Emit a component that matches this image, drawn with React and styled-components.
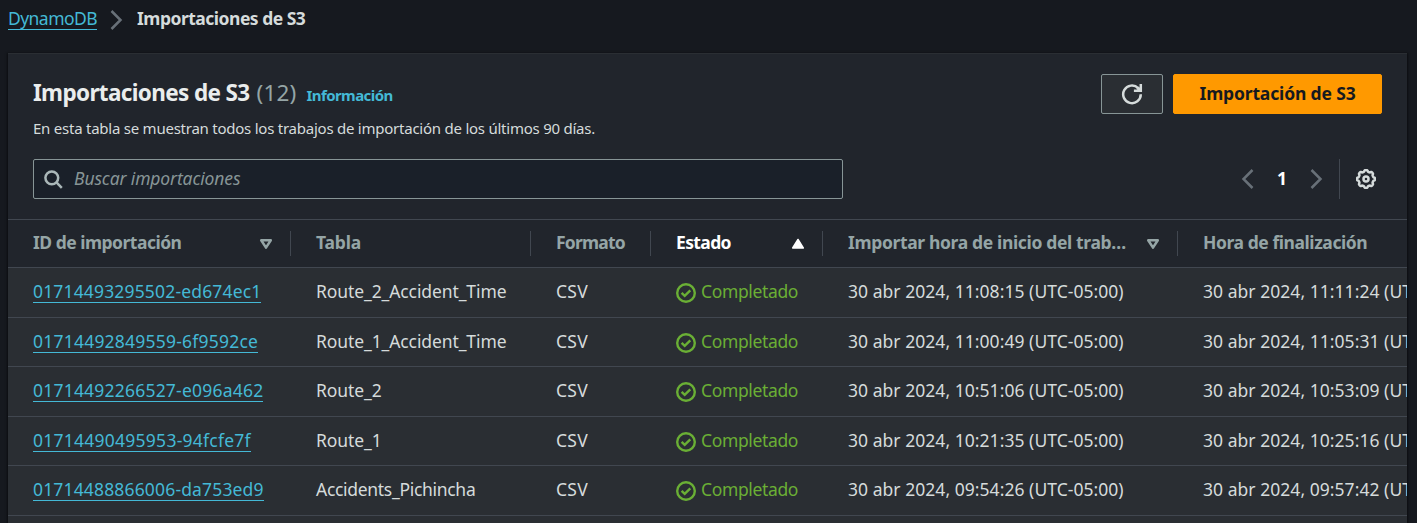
import React from "react";
import styled, { createGlobalStyle } from "styled-components";

const GlobalStyle = createGlobalStyle`
  * { box-sizing: border-box; }
  body {
    margin: 0;
    background: #16191f;
    color: #d5dbdb;
    font-family: "Noto Sans", "Open Sans", sans-serif;
    font-size: 17.5px;
    line-height: 25px;
    overflow: hidden;
  }
`;

const Page = styled.main`
  height: 523px;
  padding: 6px 10px 0 8px;
  overflow: hidden;
`;

const Breadcrumbs = styled.nav`
  display: flex;
  align-items: flex-start;
  height: 47px;
`;

const Link = styled.a`
  display: inline-block;
  height: ${(p) => p.$height || 24}px;
  color: #44b9d6;
  letter-spacing: ${(p) => p.$track || 0}px;
  white-space: nowrap;
  border-bottom: 1px solid #44b9d6;
`;

const CrumbIcon = styled.svg`
  display: block;
  margin: 4px 14px 0 13px;
`;

const Current = styled.span`
  font-weight: 700;
  letter-spacing: -0.5px;
`;

const Panel = styled.section`
  width: 1399px;
  height: 480px;
  background: #21252c;
  border-top: 1px solid #2a2e33;
  box-shadow: 0 1px 2px 1px rgba(0, 0, 0, 0.5);
  overflow: hidden;
`;

const PanelHeader = styled.header`
  display: flex;
  justify-content: space-between;
  height: 105px;
  padding: 20px 25px 0;
`;

const TitleRow = styled.div`
  display: flex;
  align-items: baseline;
  height: 36px;
`;

const Title = styled.h1`
  margin: 0;
  color: #eaeded;
  font-size: 22.5px;
  line-height: 37px;
  letter-spacing: -0.64px;
`;

const Counter = styled.span`
  margin-left: 7px;
  color: #95a5a6;
  font-size: 22.5px;
  letter-spacing: 0.2px;
`;

const InfoLink = styled.a`
  margin-left: 10px;
  color: #44b9d6;
  font-size: 15px;
  font-weight: 700;
  letter-spacing: -0.58px;
`;

const Description = styled.p`
  margin: 6px 0 0;
  font-size: 15px;
  line-height: 25px;
  letter-spacing: -0.24px;
`;

const Actions = styled.div`
  display: flex;
  gap: 10px;
`;

const Button = styled.button`
  display: flex;
  align-items: center;
  justify-content: center;
  width: ${(p) => p.$width}px;
  height: 40px;
  padding: 0 0 ${(p) => (p.$primary ? 3 : 0)}px;
  border: 1px solid ${(p) => (p.$primary ? "#ff9900" : "#879596")};
  border-radius: 2px;
  background: ${(p) => (p.$primary ? "#ff9900" : "#2a2e33")};
  color: ${(p) => (p.$primary ? "#16191f" : "#d5dbdb")};
  font: 700 17.5px "Noto Sans", sans-serif;
  letter-spacing: -0.15px;
`;

const Tools = styled.div`
  display: flex;
  justify-content: space-between;
  height: 60px;
  padding: 0 25px;
`;

const Search = styled.label`
  display: flex;
  align-items: center;
  gap: 11px;
  width: 810px;
  height: 40px;
  padding-left: 10px;
  border: 1px solid #879596;
  border-radius: 2px;
  background: #1a2029;
`;

const Placeholder = styled.span`
  padding-bottom: 2px;
  color: #879596;
  font-style: italic;
  letter-spacing: -0.12px;
`;

const Pager = styled.div`
  display: flex;
  align-items: center;
  height: 40px;
`;

const PageNumber = styled.span`
  width: 56px;
  padding-bottom: 2px;
  color: #fff;
  font-weight: 700;
  text-align: center;
`;

const Preferences = styled.div`
  display: flex;
  align-items: center;
  height: 40px;
  margin-left: 16px;
  padding: 0 6px 0 16px;
  border-left: 1px solid #414750;
`;

const Row = styled.div`
  display: grid;
  grid-template-columns: 283px 240px 120px 172px 355px 229px;
  align-items: center;
  height: ${(p) => p.$height}px;
  background: #2a2e33;
  border-bottom: 1px solid #414750;
`;

const HeaderRow = styled(Row)`
  background: #21252c;
  border-top: 1px solid #414750;
`;

const HeaderCell = styled.div`
  display: flex;
  align-items: center;
  justify-content: space-between;
  height: 25px;
  padding: 0 17px 0 25px;
  border-right: 1px solid #414750;
  color: ${(p) => (p.$active ? "#fff" : "#95a5a6")};
  font-weight: 700;
  letter-spacing: ${(p) => p.$track}px;
  white-space: nowrap;

  &:last-child {
    border-right: 0;
  }
`;

const HeaderLabel = styled.span`
  padding-bottom: 2px;
`;

const Cell = styled.div`
  height: 27px;
  padding-left: 25px;
  letter-spacing: ${(p) => p.$track || 0}px;
  white-space: nowrap;
  overflow: hidden;
`;

const Status = styled(Cell)`
  display: flex;
  align-items: flex-start;
  gap: 5px;
  color: #6aaf35;
  letter-spacing: -0.36px;
`;

const StatusIcon = styled.svg`
  flex: none;
  margin-top: 4px;
`;

const Chevron = ({ left, as: Svg = "svg" }) => (
  <Svg width="13" height="20" viewBox="0 0 13 20" fill="none" stroke="#687078" strokeWidth="2.5">
    <path d={left ? "M11.5 1 2.5 10l9 9" : "M1.5 1l9 9-9 9"} />
  </Svg>
);

const SortIcon = ({ active }) => (
  <svg width="14" height="12" viewBox="0 0 14 12" strokeLinejoin="round" strokeWidth="2.5">
    {active ? (
      <path d="M7 1.5 12.3 10H1.7z" fill="#fff" stroke="#fff" strokeWidth="1.5" />
    ) : (
      <path d="M2.2 2.2h9.6L7 9.6z" fill="none" stroke="#95a5a6" />
    )}
  </svg>
);

const SearchIcon = () => (
  <svg width="19" height="19" viewBox="0 0 19 19" fill="none" stroke="#aab7b8" strokeWidth="2.5">
    <circle cx="7.8" cy="7.8" r="6.4" />
    <path d="m12.2 12.2 5.6 5.6" />
  </svg>
);

const RefreshIcon = () => (
  <svg width="22" height="22" viewBox="0 0 22 22" fill="none" stroke="#d5dbdb" strokeWidth="2.5">
    <path d="M19.8 11.3a8.8 8.8 0 1 1-2.6-6.2l1.6 1.6" />
    <path d="M19.8 1v6.8h-6.9" />
    <path d="m16.4 4.6 3 3" strokeWidth="3" />
  </svg>
);

const gearPath = (() => {
  const points = [];
  for (let i = 0; i <= 144; i += 1) {
    const a = (i / 144) * Math.PI * 2;
    const r = 8.2 + 0.75 * Math.tanh(2.2 * Math.cos(8 * a));
    points.push(`${(10 + r * Math.cos(a)).toFixed(2)} ${(10 + r * Math.sin(a)).toFixed(2)}`);
  }
  return `M${points.join("L")}Z`;
})();

const GearIcon = () => (
  <svg width="20" height="20" viewBox="0 0 20 20" fill="none" stroke="#d5dbdb" strokeWidth="2.5">
    <path d={gearPath} />
    <circle cx="10" cy="10" r="2.5" />
  </svg>
);

const CheckIcon = () => (
  <StatusIcon width="20" height="20" viewBox="0 0 20 20" fill="none" stroke="#6aaf35" strokeWidth="2.4">
    <circle cx="10" cy="10" r="8.8" />
    <path d="m5.6 9.8 3.1 3.1 5.6-5.6" />
  </StatusIcon>
);

const columns = [
  { label: "ID de importación", track: -0.5, sort: true },
  { label: "Tabla", track: -0.19 },
  { label: "Formato", track: -0.78 },
  { label: "Estado", track: -0.62, sort: true, active: true },
  { label: "Importar hora de inicio del trab…", track: -0.35, sort: true },
  { label: "Hora de finalización", track: -0.43 },
];

const jobs = [
  { id: "01714493295502-ed674ec1", table: "Route_2_Accident_Time", start: "11:08:15", end: "11:11:24", idTrack: 0.16, track: -0.1, height: 50 },
  { id: "01714492849559-6f9592ce", table: "Route_1_Accident_Time", start: "11:00:49", end: "11:05:31", idTrack: 0.22, track: -0.1, height: 49 },
  { id: "01714492266527-e096a462", table: "Route_2", start: "10:51:06", end: "10:53:09", idTrack: 0.21, track: -0.08, height: 50 },
  { id: "01714490495953-94fcfe7f", table: "Route_1", start: "10:21:35", end: "10:25:16", idTrack: 0.25, track: -0.08, height: 49 },
  { id: "01714488866006-da753ed9", table: "Accidents_Pichincha", start: "09:54:26", end: "09:57:42", idTrack: 0.16, track: -0.3, height: 50 },
];

export default function App() {
  return (
    <Page>
      <GlobalStyle />
      <Breadcrumbs>
        <Link $track={-0.55}>DynamoDB</Link>
        <Chevron as={CrumbIcon} />
        <Current>Importaciones de S3</Current>
      </Breadcrumbs>
      <Panel>
        <PanelHeader>
          <div>
            <TitleRow>
              <Title>Importaciones de S3</Title>
              <Counter>(12)</Counter>
              <InfoLink>Información</InfoLink>
            </TitleRow>
            <Description>
              En esta tabla se muestran todos los trabajos de importación de los últimos 90 días.
            </Description>
          </div>
          <Actions>
            <Button $width={62} aria-label="Actualizar"><RefreshIcon /></Button>
            <Button $width={209} $primary>Importación de S3</Button>
          </Actions>
        </PanelHeader>
        <Tools>
          <Search>
            <SearchIcon />
            <Placeholder>Buscar importaciones</Placeholder>
          </Search>
          <Pager>
            <Chevron left />
            <PageNumber>1</PageNumber>
            <Chevron />
            <Preferences><GearIcon /></Preferences>
          </Pager>
        </Tools>
        <HeaderRow $height={49}>
          {columns.map((c) => (
            <HeaderCell key={c.label} $track={c.track} $active={c.active}>
              <HeaderLabel>{c.label}</HeaderLabel>
              {c.sort && <SortIcon active={c.active} />}
            </HeaderCell>
          ))}
        </HeaderRow>
        {jobs.map((job) => (
          <Row key={job.id} $height={job.height}>
            <Cell><Link $track={job.idTrack}>{job.id}</Link></Cell>
            <Cell $track={job.track}>{job.table}</Cell>
            <Cell $track={0.25}>CSV</Cell>
            <Status><CheckIcon />Completado</Status>
            <Cell $track={0.04}>30 abr 2024, {job.start} (UTC-05:00)</Cell>
            <Cell $track={0.04}>30 abr 2024, {job.end} (UTC-05:00)</Cell>
          </Row>
        ))}
        <Row $height={49} />
      </Panel>
    </Page>
  );
}
